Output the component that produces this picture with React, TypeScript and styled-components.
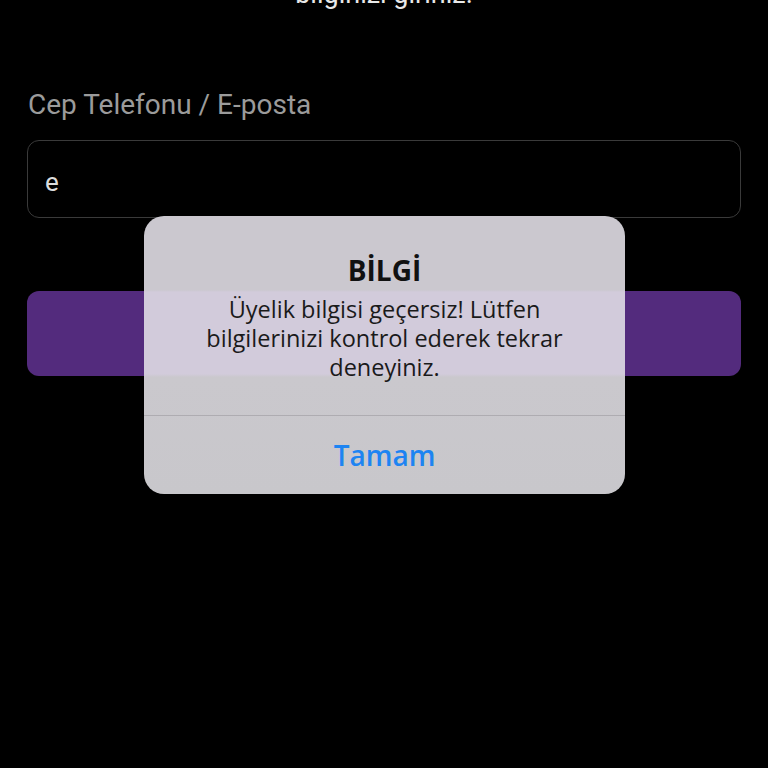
import styled, { createGlobalStyle } from 'styled-components';

const GlobalStyle = createGlobalStyle`
  html, body {
    margin: 0;
    padding: 0;
    background: #000;
    overflow: hidden;
  }
`;

const Screen = styled.div`
  position: relative;
  width: 768px;
  height: 768px;
  background: #000;
  overflow: hidden;
  font-family: Roboto, "Liberation Sans", sans-serif;
`;

const Form = styled.div`
  display: flex;
  flex-direction: column;
  padding: 0 27px;
`;

// only the bottom of this line shows above the top edge
const Heading = styled.div`
  margin-top: -21px;
  text-align: center;
  color: #e8e8e8;
  font-size: 27px;
  line-height: 30px;
`;

const Label = styled.div`
  margin-top: 80px;
  padding-left: 1px;
  color: #9b9b9b;
  font-size: 28px;
  line-height: 32px;
`;

const Field = styled.div`
  margin-top: 19px;
  height: 78px;
  box-sizing: border-box;
  border: 1px solid #3a3a3a;
  border-radius: 12px;
  display: flex;
  align-items: center;
  padding: 6px 17px 0;
  color: #dcdcdc;
  font-size: 26px;
`;

const Submit = styled.div`
  margin-top: 73px;
  height: 85px;
  border-radius: 12px;
  background: #532b7d;
`;

const Overlay = styled.div`
  position: absolute;
  left: 144px;
  top: 216px;
  width: 481px;
  height: 278px;
  border-radius: 20px;
  overflow: hidden;
  display: flex;
  flex-direction: column;
  background: linear-gradient(
    to bottom,
    #cbc8cf 0px,
    #cbc8cf 74px,
    #d2cbdb 76px,
    #d2cbdb 158px,
    #cac8cd 161px,
    #c8c7cb 100%
  );
  font-family: "Open Sans", "Liberation Sans", sans-serif;
`;

const Body = styled.div`
  flex: 1;
  display: flex;
  flex-direction: column;
  align-items: center;
  padding-top: 36px;
  text-align: center;
`;

const Title = styled.div`
  color: #111;
  font-weight: 700;
  font-size: 28px;
  line-height: 36px;
`;

const Message = styled.div`
  margin-top: 7px;
  color: #1a1a1a;
  font-size: 23.5px;
  line-height: 29px;
  width: 366px;
`;

const Divider = styled.div`
  height: 1px;
  background: #aeacb1;
`;

const Action = styled.div`
  height: 78px;
  display: flex;
  align-items: center;
  justify-content: center;
  color: #1d84f2;
  font-size: 28px;
  font-weight: 600;
`;

export default function App() {
  return (
    <Screen>
      <GlobalStyle />
      <Form>
        <Heading>bilginizi giriniz.</Heading>
        <Label>Cep Telefonu / E-posta</Label>
        <Field>e</Field>
        <Submit />
      </Form>
      <Overlay>
        <Body>
          <Title>BİLGİ</Title>
          <Message>
            Üyelik bilgisi geçersiz! Lütfen bilgilerinizi kontrol ederek tekrar deneyiniz.
          </Message>
        </Body>
        <Divider />
        <Action>Tamam</Action>
      </Overlay>
    </Screen>
  );
}
